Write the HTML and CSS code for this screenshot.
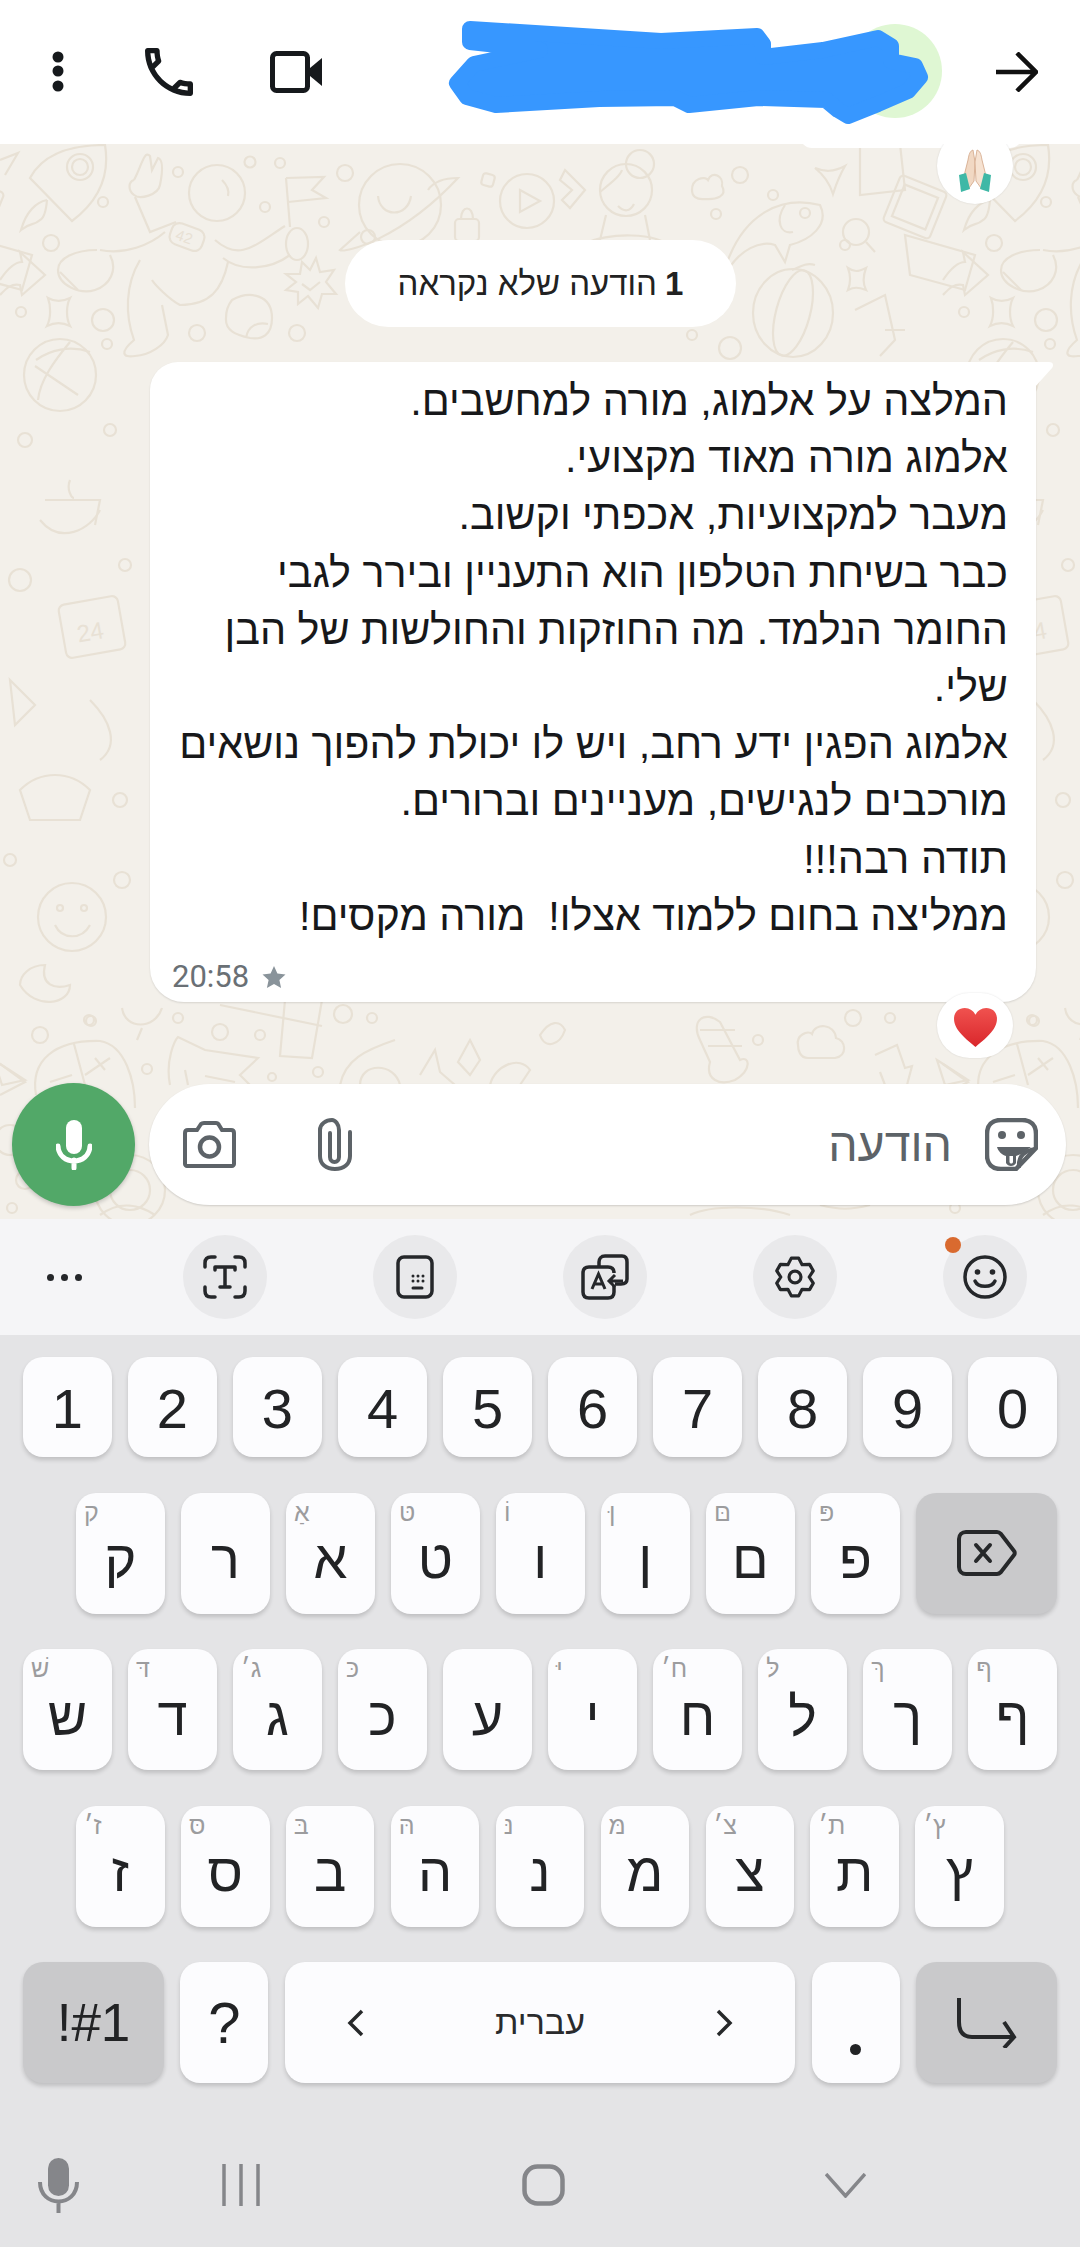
FILE: index.html
```html
<!DOCTYPE html>
<html lang="he">

<head>
    <meta charset="UTF-8">
    <meta name="viewport" content="width=device-width, initial-scale=1.0">
    <title>Chat</title>
    <link rel="stylesheet" href="styles.css">
</head>

<body>
    <!-- Top bar -->
    <header class="topbar">
        <svg class="ic-dots" viewBox="0 0 12 42"><circle cx="6" cy="6" r="5.5"/><circle cx="6" cy="20" r="5.5"/><circle cx="6" cy="35" r="5.5"/></svg>
        <svg class="ic-phone" viewBox="3 3 18 18"><path d="M6.54 5c.06.89.21 1.76.45 2.59l-1.2 1.2c-.41-1.2-.67-2.47-.76-3.79h1.51m9.86 12.02c.85.24 1.72.39 2.6.45v1.49c-1.32-.09-2.59-.35-3.8-.75l1.2-1.19M7.5 3H4c-.55 0-1 .45-1 1 0 9.39 7.61 17 17 17 .55 0 1-.45 1-1v-3.49c0-.55-.45-1-1-1-1.24 0-2.45-.2-3.57-.57-.1-.04-.21-.05-.31-.05-.26 0-.51.1-.71.29l-2.2 2.2c-2.83-1.45-5.15-3.76-6.59-6.59l2.2-2.2c.28-.28.36-.67.25-1.02C8.7 6.45 8.5 5.25 8.5 4c0-.55-.45-1-1-1z"/></svg>
        <svg class="ic-video" viewBox="0 0 52 42"><rect x="2.5" y="2.5" width="35" height="37" rx="4" fill="none" stroke="#16191c" stroke-width="5"/><path d="M40 17 L52 7 V35 L40 25 Z" fill="#16191c"/></svg>
        <svg class="ic-back" viewBox="0 0 42 40"><path d="M0 20 H39 M21 1 L40 20 L21 39" fill="none" stroke="#111" stroke-width="4.5"/></svg>
        <!-- blue scribble hides the name -->
        <svg class="scribble" viewBox="0 0 1080 144">
            <circle cx="895" cy="71" r="47" fill="#dff7d3"/>
            <path d="M470 29 L661 41 L757 36 L763 44 L763 57 L823 50 L878 38 L891 46 L891 61 L915 66 L920 77 L908 91 L878 104 L848 116 L838 110 L826 100 L758 98 L689 105 L675 98 L599 99 L496 105 L467 97 L457 83 L474 64 L540 50 L470 42 Z" fill="#3797ff" stroke="#3797ff" stroke-width="16" stroke-linejoin="round"/>
        </svg>
    </header>

    <!-- Conversation -->
    <main class="chat">
        <svg class="wallpaper" viewBox="0 144 1080 1075">
            <defs>
                <g id="tile">
                    <path d="M0 160 L18 153 L5 175"/>
                    <path d="M30 178 C45 150 80 145 105 145 C110 175 100 200 72 221 Z"/>
                    <circle cx="80" cy="167" r="13"/><circle cx="80" cy="167" r="8"/>
                    <path d="M47 200 C36 202 26 212 21 230 C30 222 34 226 40 220 C44 218 46 212 47 200"/>
                    <path d="M134 180 C142 165 144 150 150 156 L152 170 L158 158 C164 160 162 175 160 185 C158 195 140 200 134 195 C128 190 128 182 134 180"/>
                    <path d="M135 197 L150 232 L176 222"/>
                    <circle cx="217" cy="193" r="28"/><path d="M222 180 C228 186 229 192 228 196"/>
                    <path d="M165 232 C150 245 125 255 100 250"/>
                    <path d="M97 250 C75 250 58 258 58 270 C58 285 80 295 95 290 C110 285 118 270 110 255"/>
                    <path d="M60 272 L78 290"/>
                    <rect x="170" y="226" width="34" height="22" rx="8" transform="rotate(20 187 237)"/>
                    <text x="176" y="243" class="tag" transform="rotate(20 187 237)">42</text>
                    <path d="M215 240 C240 262 255 245 285 226"/>
                    <ellipse cx="297" cy="244" rx="11" ry="16"/>
                    <path d="M223 258 C240 272 270 270 290 255"/>
                    <path d="M228 262 C222 290 210 305 180 305 C170 300 155 285 152 280"/>
                    <path d="M140 260 C125 285 125 315 134 340 C120 352 122 358 135 356 C150 355 165 345 168 335 L162 305"/>
                    <path d="M286 178 L290 227 M286 178 L324 177 L312 190 L326 198 L288 202"/>
                    <circle cx="250" cy="162" r="5.5"/><circle cx="280" cy="163" r="5"/><circle cx="178" cy="172" r="5"/><circle cx="103" cy="202" r="5"/><circle cx="265" cy="207" r="5"/><circle cx="324" cy="222" r="5"/><circle cx="51" cy="243" r="8"/><circle cx="345" cy="173" r="8"/><circle cx="21" cy="312" r="5"/><circle cx="103" cy="320" r="11"/><circle cx="197" cy="333" r="8"/><circle cx="107" cy="344" r="5"/><circle cx="297" cy="333" r="8"/>
                    <path d="M0 280 C10 265 18 262 22 262 L20 252 L45 275 L22 295 L20 285 C10 283 5 290 0 295"/>
                    <path d="M48 298 C55 302 62 302 70 298 C66 306 66 318 70 326 C62 322 55 322 47 326 C51 318 51 306 48 298Z"/>
                    <path d="M302 262 L310 270 L316 258 L320 272 L334 270 L326 282 L336 294 L322 294 L318 308 L308 296 L298 304 L298 292 L286 290 L296 282 L286 274 L300 274 Z"/>
                    <path d="M302 284 L310 290 L320 282"/>
                    <path d="M232 300 C250 290 272 295 272 318 C272 335 262 340 250 338 C235 335 225 330 226 318 C226 310 228 305 232 300Z M246 338 C248 325 258 322 268 324"/>
                    <circle cx="60" cy="375" r="36"/><path d="M36 360 C50 350 70 345 90 352 M35 366 L78 395 M70 342 C55 360 40 380 38 400"/>
                    <circle cx="400" cy="205" r="41"/><path d="M378 196 C380 218 408 218 411 196"/>
                    <path d="M360 232 L340 250 C345 253 400 240 458 178 C440 178 432 184 428 190"/>
                    <circle cx="368" cy="237" r="7"/>
                    <rect x="455" y="219" width="24" height="22" rx="4"/><path d="M461 219 C461 205 473 205 473 219"/>
                    <rect x="482" y="174" width="12" height="12" rx="3" transform="rotate(15 488 180)"/>
                    <circle cx="527" cy="201" r="27"/><path d="M520 190 L540 201 L520 212 Z"/>
                    <path d="M565 170 L585 190 L570 208 L562 200 L572 190 L560 180 Z"/>
                    <circle cx="626" cy="190" r="26"/><circle cx="640" cy="164" r="14"/><path d="M600 192 C612 182 620 176 622 170 M606 215 L600 240 M645 215 L650 240 M585 244 C605 232 660 232 672 248"/>
                    <path d="M618 206 C624 212 630 212 634 204"/>
                    <path d="M692 190 C692 178 705 176 708 180 C712 170 724 176 722 186 C728 196 716 200 705 199 C696 200 692 196 692 190Z"/>
                    <path d="M815 168 C825 172 833 172 845 166 C838 178 836 185 833 194 C830 184 825 176 815 168Z"/>
                    <path d="M860 144 L860 195 L905 190 L900 144"/>
                    <rect x="890" y="182" width="50" height="50" rx="4" transform="rotate(22 915 207)"/>
                    <rect x="897" y="190" width="36" height="34" transform="rotate(22 915 207)"/>
                    <path d="M728 260 C745 215 780 195 820 205 C830 225 810 240 790 245 L785 262 L775 245 C760 240 740 250 728 270"/>
                    <path d="M785 205 C775 220 780 235 793 232"/>
                    <circle cx="856" cy="232" r="13"/><path d="M866 242 L875 252"/>
                    <path d="M905 235 L975 255 L965 290 L910 275 Z"/>
                    <ellipse cx="793" cy="313" rx="40" ry="44"/><ellipse cx="793" cy="313" rx="17" ry="44" transform="rotate(15 793 313)"/>
                    <path d="M792 270 C798 268 805 262 815 265"/>
                    <path d="M848 268 C854 272 858 272 866 268 C863 276 863 284 866 290 C858 287 854 287 848 290 C851 282 851 276 848 268Z"/>
                    <path d="M855 310 L885 295 L895 340 L880 356 M885 330 L905 330"/>
                    <circle cx="730" cy="348" r="11"/><circle cx="692" cy="335" r="5"/><circle cx="716" cy="214" r="5"/><circle cx="773" cy="195" r="5"/><circle cx="740" cy="175" r="8"/><circle cx="805" cy="213" r="5"/><circle cx="845" cy="245" r="5"/>
                    <path d="M40 520 C60 545 90 530 100 510 M45 500 L100 500 L95 525 M70 480 C66 490 72 498 74 498"/>
                    <circle cx="25" cy="440" r="7"/><circle cx="110" cy="430" r="6"/><circle cx="20" cy="580" r="11"/><circle cx="125" cy="565" r="6"/>
                    <rect x="62" y="600" width="60" height="54" rx="6" transform="rotate(-10 92 627)"/>
                    <text x="76" y="640" class="tag big" transform="rotate(-10 92 627)">24</text>
                    <path d="M10 680 L35 705 L15 725 Z"/><path d="M90 700 C110 720 120 745 100 760"/>
                    <path d="M20 790 C40 770 70 770 90 790 L80 820 L30 820 Z"/><circle cx="120" cy="800" r="7"/>
                    <circle cx="72" cy="917" r="34"/><circle cx="60" cy="908" r="3"/><circle cx="84" cy="908" r="3"/><path d="M55 925 C62 940 82 940 90 925"/>
                    <path d="M20 985 C35 1010 70 1005 70 985 C55 990 40 985 45 965 C30 965 20 975 20 985Z"/>
                    <circle cx="10" cy="860" r="6"/><circle cx="122" cy="880" r="8"/>
                    <path d="M122 1008 C125 1030 155 1030 162 1008 M142 1028 L137 1040"/>
                    <circle cx="89" cy="1020" r="5"/><circle cx="40" cy="1035" r="8"/><circle cx="178" cy="1018" r="5"/><circle cx="220" cy="1032" r="8"/><circle cx="260" cy="1035" r="5"/><circle cx="343" cy="1014" r="9"/><circle cx="372" cy="1018" r="5"/><circle cx="147" cy="1069" r="5"/><circle cx="318" cy="1072" r="5"/><circle cx="272" cy="1077" r="4"/>
                    <path d="M36 1095 C30 1060 55 1040 100 1041 C125 1045 135 1080 135 1108 M74 1044 L85 1085 M95 1058 L105 1070 M85 1075 L110 1058 M50 1082 L72 1075"/>
                    <path d="M0 1064 L25 1082 L0 1095"/>
                    <path d="M170 1085 C165 1060 175 1040 178 1037 L205 1050 L258 1058 L240 1075 L250 1085"/>
                    <path d="M185 1070 L188 1085 M205 1076 L235 1082"/>
                    <path d="M285 1000 L280 1056 L312 1058 L322 1000 M220 1005 L322 1026"/>
                    <path d="M340 1085 C345 1060 365 1050 395 1040 M360 1085 C360 1062 395 1062 400 1085"/>
                    <path d="M420 1075 L435 1050 L440 1072 L455 1085 M470 1040 L480 1060 L470 1075 L458 1062 Z"/>
                    <path d="M490 1085 C495 1065 520 1055 530 1070 L520 1085"/>
                    <path d="M540 1035 C550 1020 560 1020 565 1030 C560 1045 545 1050 540 1035Z"/>
                    <path d="M710 1062 L700 1040 C690 1020 705 1010 720 1022 L740 1060 C750 1055 752 1070 735 1080 C720 1086 705 1080 710 1062Z"/>
                    <path d="M700 1030 L735 1030 M708 1046 L742 1046"/>
                    <path d="M798 1045 C796 1035 808 1030 812 1034 C815 1022 835 1024 836 1038 C846 1040 848 1056 835 1058 L808 1058 C800 1058 798 1050 798 1045Z"/>
                    <circle cx="758" cy="1040" r="5"/><circle cx="853" cy="1018" r="8"/><circle cx="890" cy="1018" r="5"/><circle cx="1034" cy="1021" r="5"/>
                    <path d="M875 1055 L897 1045 L905 1068 L912 1066 L907 1085 M880 1072 L885 1085"/>
                    <path d="M937 1060 L968 1080 L945 1085 Z"/>
                    <circle cx="130" cy="1190" r="35"/><circle cx="130" cy="1190" r="20"/>
                    <path d="M18 1140 L45 1152 L35 1175 Z"/><circle cx="10" cy="1140" r="15"/><circle cx="12" cy="1208" r="5"/><circle cx="25" cy="1180" r="9"/>
                    <path d="M100 1215 C120 1200 140 1205 155 1215"/>
                    <path d="M690 1215 C710 1205 760 1205 790 1215 M820 1205 C840 1210 850 1210 870 1205"/>
                </g>
            </defs>
            <use href="#tile"/>
            <use href="#tile" x="943"/>
            <use href="#tile" x="-943"/>
        </svg>

        <div class="prev-bubble"></div>
        <div class="reaction reaction-top">
            <svg viewBox="0 0 36 44" class="emoji-pray">
                <path d="M16 2 C13 3 12 6 11 12 L7 28 L12 40 L17 33 L18 14 Z" fill="#f1d8c3" stroke="#d6ad90" stroke-width=".9"/>
                <path d="M20 2 C23 3 24 6 25 12 L29 28 L24 40 L19 33 L18 14 Z" fill="#f6e2d1" stroke="#d6ad90" stroke-width=".9"/>
                <path d="M2 27 L9 25 L13 41 L4 44 Z" fill="#3fb8a6"/>
                <path d="M34 27 L27 25 L23 41 L32 44 Z" fill="#3fb8a6"/>
            </svg>
        </div>

        <div class="unread" dir="rtl"><b>1</b> הודעה שלא נקראה</div>

        <div class="bubble">
            <div class="bubble-text" dir="rtl">המלצה על אלמוג, מורה למחשבים.<br>אלמוג מורה מאוד מקצועי.<br>מעבר למקצועיות, אכפתי וקשוב.<br>כבר בשיחת הטלפון הוא התעניין ובירר לגבי<br>החומר הנלמד. מה החוזקות והחולשות של הבן<br>שלי.<br>אלמוג הפגין ידע רחב, ויש לו יכולת להפוך נושאים<br>מורכבים לנגישים, מעניינים וברורים.<br>תודה רבה!!!<br>ממליצה בחום ללמוד אצלו!&nbsp; מורה מקסים!</div>
            <div class="bubble-meta">
                <span class="time">20:58</span>
                <svg class="star" viewBox="0 0 24 24"><path d="M12 1 L15.4 8.6 L23.5 9.5 L17.4 15 L19.1 23 L12 18.9 L4.9 23 L6.6 15 L.5 9.5 L8.6 8.6 Z"/></svg>
            </div>
            <svg class="bubble-tail" viewBox="0 0 20 26"><path d="M0 0 H15 C19 0 20 3 18 6 L0 26 Z" fill="#fff"/></svg>
            <div class="reaction reaction-heart">
                <svg viewBox="0 0 46 42" class="emoji-heart">
                    <defs><linearGradient id="heartFill" x1="0" y1="0" x2="0" y2="1"><stop offset="0" stop-color="#f0524f"/><stop offset="1" stop-color="#d9262b"/></linearGradient></defs>
                    <path d="M23 41 C14 33 1 24 1 12 C1 5 6 1 12 1 C17 1 21 4 23 8 C25 4 29 1 34 1 C40 1 45 5 45 12 C45 24 32 33 23 41 Z" fill="url(#heartFill)"/>
                </svg>
            </div>
        </div>

        <div class="composer">
            <div class="mic-btn">
                <svg viewBox="0 0 36 50" class="ic-mic"><rect x="10" y="0" width="16" height="34" rx="8" fill="#fff"/><path d="M2 26 C3 46 33 46 34 26 M18 40 V48" fill="none" stroke="#fff" stroke-width="5" stroke-linecap="round"/></svg>
            </div>
            <div class="input-bar">
                <svg class="ic-camera" viewBox="0 0 53 47"><path d="M2 12 C2 10 3 9 5 9 H14 L18 3 C19 2 20 2 21 2 H33 C34 2 35 2 36 4 L39 9 H48 C50 9 51 10 51 12 V43 C51 44 50 45 49 45 H4 C3 45 2 44 2 43 Z" fill="none" stroke="#5d6368" stroke-width="4"/><circle cx="26.500" cy="26" r="9.500" fill="none" stroke="#5d6368" stroke-width="4.500"/></svg>
                <svg class="ic-clip" viewBox="0 0 34 53"><path d="M22 15 V39 C22 42 20 44 17.500 44 C15 44 13 42 13 39 V12 C13 6 17 2 20 2 C26 2 32 6 32 12 V38 C32 46 26 51 17 51 C8 51 2 46 2 38 V14" transform="translate(34 0) scale(-1 1)" fill="none" stroke="#5d6368" stroke-width="4" stroke-linecap="round"/></svg>
                <span class="placeholder" dir="rtl">הודעה</span>
                <svg class="ic-sticker" viewBox="0 0 53 53"><path d="M16 2 H37 C46 2 51 7 51 16 V30 L31 51 H16 C7 51 2 46 2 37 V16 C2 7 7 2 16 2 Z" fill="none" stroke="#5d6368" stroke-width="4.500"/><circle cx="17" cy="17" r="4" fill="#5d6368"/><circle cx="36" cy="17" r="4" fill="#5d6368"/><path d="M34 50 C33 40 38 33 50 31" fill="none" stroke="#5d6368" stroke-width="4"/><path d="M12 29 H46 L36 36 L31 38 V45 C29 49 23 49 21 45 V38 C17 37 13 33 12 29 Z" fill="#5d6368"/><path d="M24.500 38 V44 C25 46 27.500 46 28 44 V38 Z" fill="#fff"/></svg>
            </div>
        </div>
    </main>

    <!-- Keyboard toolbar -->
    <section class="toolbar">
        <svg class="ic-more" viewBox="0 0 37 9"><circle cx="4.500" cy="4.500" r="3.500"/><circle cx="18.500" cy="4.500" r="3.500"/><circle cx="32.500" cy="4.500" r="3.500"/></svg>
        <div class="tool">
            <svg viewBox="0 0 44 44"><path d="M2 12 V8 C2 4 4 2 8 2 H12 M32 2 H36 C40 2 42 4 42 8 V12 M2 32 V36 C2 40 4 42 8 42 H12 M32 42 H36 C40 42 42 40 42 36 V32 M12 12 H32 M12 12 V15 M32 12 V15 M22 12 V32 M17 32 H27" fill="none" stroke="#25272a" stroke-width="3.500" stroke-linecap="round"/></svg>
        </div>
        <div class="tool">
            <svg viewBox="0 0 44 44"><rect x="5" y="2" width="34" height="40" rx="6" fill="none" stroke="#25272a" stroke-width="3.500"/><g fill="#25272a"><circle cx="20" cy="21" r="1.500"/><circle cx="25" cy="21" r="1.500"/><circle cx="30" cy="21" r="1.500"/><circle cx="20" cy="26" r="1.500"/><circle cx="25" cy="26" r="1.500"/><circle cx="30" cy="26" r="1.500"/></g><path d="M20 33 H29" stroke="#25272a" stroke-width="3" stroke-linecap="round"/></svg>
        </div>
        <div class="tool">
            <svg class="ic-translate" viewBox="0 0 48 46"><path d="M18 12 V8 C18 5 20 2 24 2 H41 C44 2 46 4 46 8 V25 C46 28 44 30 40 30 H34" fill="none" stroke="#25272a" stroke-width="3.500"/><path d="M33 32 V38 C33 42 31 44 27 44 H8 C4 44 2 42 2 38 V19 C2 15 4 13 8 13 H27 C31 13 33 15 33 19" fill="none" stroke="#25272a" stroke-width="3.500"/><path d="M11 35 L17.500 20 L24 35 M13 30 H22 M42 27 H29 M34 21 L28 27 L34 33" fill="none" stroke="#25272a" stroke-width="3"/></svg>
        </div>
        <div class="tool">
            <svg viewBox="0 0 48 48"><path d="M20 3.400 H28 L31.750 10.600 L39.900 10.200 L43.900 17.200 L39.500 24 L43.900 30.800 L39.900 37.800 L31.750 37.400 L28 44.600 H20 L16.250 37.400 L8.100 37.800 L4.100 30.800 L8.500 24 L4.100 17.200 L8.100 10.200 L16.250 10.600 Z" fill="none" stroke="#25272a" stroke-width="3.500" stroke-linejoin="round"/><circle cx="24" cy="24" r="6.500" fill="none" stroke="#25272a" stroke-width="3.500"/></svg>
        </div>
        <div class="tool tool-last">
            <span class="notify"></span>
            <svg viewBox="0 0 44 44"><circle cx="22" cy="22" r="20" fill="none" stroke="#25272a" stroke-width="3.500"/><circle cx="14.500" cy="17" r="2.800" fill="#25272a"/><circle cx="29.500" cy="17" r="2.800" fill="#25272a"/><path d="M12 26 C15 33 29 33 32 26" fill="none" stroke="#25272a" stroke-width="3.500" stroke-linecap="round"/></svg>
        </div>
    </section>

    <!-- Keyboard -->
    <section class="keyboard">
        <div class="row row-num">
            <div class="key num">1</div><div class="key num">2</div><div class="key num">3</div><div class="key num">4</div><div class="key num">5</div><div class="key num">6</div><div class="key num">7</div><div class="key num">8</div><div class="key num">9</div><div class="key num">0</div>
        </div>
        <div class="row row-inset-left">
            <div class="key"><i>ק</i>ק</div><div class="key">ר</div><div class="key"><i>אַ</i>א</div><div class="key"><i>טּ</i>ט</div><div class="key"><i>וֹ</i>ו</div><div class="key"><i>ןּ</i>ן</div><div class="key"><i>םּ</i>ם</div><div class="key"><i>פּ</i>פ</div>
            <div class="key mod wide">
                <svg class="ic-backspace" viewBox="0 0 60 46"><path d="M9 2 H40 C42 2 43 3 44 4 L57 21 C58 22 58 24 57 25 L44 42 C43 43 42 44 40 44 H9 C5 44 2 41 2 37 V9 C2 5 5 2 9 2 Z" fill="none" stroke="#26282a" stroke-width="4"/><path d="M19 15 L33 31 M33 15 L19 31" stroke="#26282a" stroke-width="4" stroke-linecap="round"/></svg>
            </div>
        </div>
        <div class="row">
            <div class="key"><i>שׁ</i>ש</div><div class="key"><i>דּ</i>ד</div><div class="key"><i>ג׳</i>ג</div><div class="key"><i>כּ</i>כ</div><div class="key">ע</div><div class="key"><i>יּ</i>י</div><div class="key"><i>ח׳</i>ח</div><div class="key"><i>לּ</i>ל</div><div class="key"><i>ךּ</i>ך</div><div class="key"><i>ףּ</i>ף</div>
        </div>
        <div class="row row-inset">
            <div class="key"><i>ז׳</i>ז</div><div class="key"><i>סּ</i>ס</div><div class="key"><i>בּ</i>ב</div><div class="key"><i>הּ</i>ה</div><div class="key"><i>נּ</i>נ</div><div class="key"><i>מּ</i>מ</div><div class="key"><i>צ׳</i>צ</div><div class="key"><i>ת׳</i>ת</div><div class="key"><i>ץ׳</i>ץ</div>
        </div>
        <div class="row">
            <div class="key mod wide sym">!#1</div>
            <div class="key punct">?</div>
            <div class="key space">
                <svg class="chev" viewBox="0 0 18 28"><path d="M15 2 L3 14 L15 26" fill="none" stroke="#26282a" stroke-width="3.500"/></svg>
                <span class="lang" dir="rtl">עברית</span>
                <svg class="chev" viewBox="0 0 18 28"><path d="M3 2 L15 14 L3 26" fill="none" stroke="#26282a" stroke-width="3.500"/></svg>
            </div>
            <div class="key punct dot"><span></span></div>
            <div class="key mod wide">
                <svg class="ic-enter" viewBox="0 0 60 50"><path d="M2 0 V24 C2 34 6 39 15 39 H56 M47 24 L57 39 L47 50" fill="none" stroke="#26282a" stroke-width="4"/></svg>
            </div>
        </div>

        <nav class="navbar">
            <svg class="nav-mic" viewBox="0 0 41 55"><rect x="10" y="0" width="21" height="38" rx="10.500" fill="#85868a"/><path d="M2 24 C2 50 39 50 39 24 M20.500 43 V55" fill="none" stroke="#85868a" stroke-width="4"/></svg>
            <svg class="nav-recents" viewBox="0 0 38 42"><path d="M2 0 V42 M19 0 V42 M36 0 V42" stroke="#85868a" stroke-width="3.500"/></svg>
            <svg class="nav-home" viewBox="0 0 43 42"><rect x="2.500" y="2.500" width="38" height="37" rx="13" fill="none" stroke="#85868a" stroke-width="4.500"/></svg>
            <svg class="nav-hide" viewBox="0 0 41 25"><path d="M1 1 L20.500 23 L40 1" fill="none" stroke="#85868a" stroke-width="3.500"/></svg>
        </nav>
    </section>
</body>

</html>
```

FILE: styles.css
```css
* {
    box-sizing: border-box;
}

html,
body {
    margin: 0;
    padding: 0;
}

body {
    width: 1080px;
    height: 2247px;
    overflow: hidden;
    background-color: #e4e4e6;
    font-family: "Liberation Sans", "Noto Sans", sans-serif;
    color: #1b1c1e;
    display: flex;
    flex-direction: column;
}

/* Top bar */
.topbar {
    position: relative;
    height: 144px;
    background-color: #fff;
    display: flex;
    align-items: center;
    padding-left: 52px;
    flex: none;
}

.ic-dots {
    width: 12px;
    height: 42px;
    fill: #16191c;
}

.ic-phone {
    width: 48px;
    height: 48px;
    margin-left: 81px;
    fill: #16191c;
}

.ic-video {
    width: 52px;
    height: 42px;
    margin-left: 77px;
}

.ic-back {
    width: 42px;
    height: 40px;
    margin-left: 674px;
}

.scribble {
    position: absolute;
    left: 0;
    top: 0;
    width: 1080px;
    height: 144px;
}

/* Conversation */
.chat {
    position: relative;
    height: 1075px;
    flex: none;
    background-color: #f3f0ea;
    display: flex;
    flex-direction: column;
    overflow: hidden;
}

.wallpaper {
    position: absolute;
    left: 0;
    top: 0;
    width: 1080px;
    height: 1075px;
    fill: none;
    stroke: #e8e1d5;
    stroke-width: 2.2;
}

.tag {
    font-family: "Liberation Sans", sans-serif;
    font-size: 15px;
    fill: #e8e1d5;
    stroke: none;
}

.tag.big {
    font-size: 24px;
}

.prev-bubble {
    position: absolute;
    left: 800px;
    top: -10px;
    width: 222px;
    height: 14px;
    background-color: #fff;
    border-radius: 0 0 12px 12px;
}

.reaction {
    position: absolute;
    width: 76px;
    height: 76px;
    border-radius: 38px;
    background-color: #fff;
    box-shadow: 0 0 2px rgba(0, 0, 0, 0.12);
    display: flex;
    align-items: center;
    justify-content: center;
}

.reaction-top {
    left: 937px;
    top: -16px;
}

.emoji-pray {
    width: 36px;
    height: 44px;
    margin-top: 8px;
}

.reaction-heart {
    left: 787px;
    top: 631px;
    height: 65px;
}

.emoji-heart {
    width: 45px;
    height: 41px;
    margin-top: 4px;
}

.unread {
    position: relative;
    align-self: flex-start;
    margin: 96px 0 0 345px;
    width: 391px;
    height: 87px;
    border-radius: 44px;
    background-color: #fff;
    display: flex;
    align-items: center;
    justify-content: center;
    font-size: 33px;
    color: #222;
}

.unread b {
    margin-left: 8px;
}

.bubble {
    position: relative;
    margin: 35px 0 0 150px;
    width: 886px;
    height: 640px;
    background-color: #fff;
    border-radius: 28px 0 34px 34px;
    box-shadow: 0 1px 2px rgba(0, 0, 0, 0.12);
    padding: 11px 28px 0 22px;
    display: flex;
    flex-direction: column;
}

.bubble-text {
    font-size: 41.300px;
    line-height: 57.200px;
    color: #17181a;
    white-space: nowrap;
}

.bubble-meta {
    margin-top: 13px;
    display: flex;
    align-items: center;
    gap: 13px;
}

.time {
    font-family: Roboto, sans-serif;
    font-size: 31px;
    color: #6a7075;
}

.star {
    width: 24px;
    height: 24px;
    fill: #89939a;
}

.bubble-tail {
    position: absolute;
    right: -18px;
    top: 0;
    width: 20px;
    height: 26px;
}

/* Composer */
.composer {
    position: relative;
    margin-top: auto;
    padding: 0 14px 13px 12px;
    display: flex;
    align-items: center;
    gap: 14px;
}

.mic-btn {
    width: 123px;
    height: 123px;
    flex: none;
    border-radius: 50%;
    background-color: #52a868;
    box-shadow: 0 2px 4px rgba(0, 0, 0, 0.2);
    display: flex;
    align-items: center;
    justify-content: center;
}

.ic-mic {
    width: 36px;
    height: 50px;
}

.input-bar {
    flex: 1;
    height: 121px;
    border-radius: 61px;
    background-color: #fff;
    box-shadow: 0 1px 2px rgba(0, 0, 0, 0.15);
    display: flex;
    align-items: center;
    padding: 0 28px 0 34px;
}

.ic-camera {
    width: 53px;
    height: 47px;
}

.ic-clip {
    width: 34px;
    height: 53px;
    margin-left: 82px;
}

.placeholder {
    margin-left: auto;
    font-size: 46.500px;
    color: #5d6368;
}

.ic-sticker {
    width: 53px;
    height: 53px;
    margin-left: 33px;
}

/* Keyboard toolbar */
.toolbar {
    height: 116px;
    flex: none;
    background-color: #f5f5f7;
    display: flex;
    align-items: center;
    padding-left: 46px;
}

.ic-more {
    width: 37px;
    height: 9px;
    fill: #25272a;
    margin-right: 100px;
}

.tool {
    position: relative;
    width: 84px;
    height: 84px;
    border-radius: 50%;
    background-color: #e9e9eb;
    display: flex;
    align-items: center;
    justify-content: center;
    margin-right: 106px;
}

.tool svg {
    width: 44px;
    height: 44px;
}

.tool .ic-translate {
    width: 48px;
    height: 46px;
}

.tool-last {
    margin-right: 0;
}

.notify {
    position: absolute;
    left: 2px;
    top: 2px;
    width: 16px;
    height: 16px;
    border-radius: 50%;
    background-color: #d96a2f;
}

/* Keyboard */
.keyboard {
    flex: 1;
    background-color: #e4e4e6;
    padding: 22px 23px 0;
    display: flex;
    flex-direction: column;
    gap: 35.500px;
}

.row {
    display: flex;
    gap: 16.300px;
    height: 121px;
    flex: none;
}

.row-num {
    height: 100px;
}

.row-inset-left {
    margin-left: 53px;
}

.row-inset {
    margin: 0 53px;
}

.key {
    position: relative;
    flex: 1 1 0;
    min-width: 0;
    background-color: #fcfcfe;
    border-radius: 20px;
    box-shadow: 0 3px 4px rgba(0, 0, 0, 0.16);
    display: flex;
    align-items: center;
    justify-content: center;
    font-size: 54px;
    color: #222325;
    padding-top: 12px;
}

.key i {
    position: absolute;
    left: 8px;
    top: 5px;
    font-style: normal;
    font-size: 25px;
    color: #9c9c9e;
}

.key.num {
    font-size: 56px;
    padding-top: 2px;
}

.key.mod {
    background-color: #c9c9cb;
    padding-top: 0;
}

.key.wide {
    flex: 0 0 141px;
}

.key.sym {
    font-size: 53px;
}

.key.punct {
    flex: 0 0 88px;
    padding-top: 0;
    font-size: 58px;
}

.key.space {
    flex: 1 1 0;
    padding: 0 62px;
    justify-content: space-between;
}

.chev {
    width: 18px;
    height: 28px;
}

.lang {
    font-size: 34px;
    color: #2a2b2d;
}

.dot {
    align-items: flex-end;
}

.dot span {
    width: 11px;
    height: 11px;
    border-radius: 50%;
    background-color: #222325;
    margin-bottom: 28px;
}

.ic-backspace {
    width: 60px;
    height: 46px;
}

.ic-enter {
    width: 60px;
    height: 50px;
}

/* Nav bar */
.navbar {
    margin: 39px 0 0 15px;
    display: flex;
    align-items: center;
}

.nav-mic {
    width: 41px;
    height: 55px;
}

.nav-recents {
    width: 38px;
    height: 42px;
    margin-left: 143px;
}

.nav-home {
    width: 43px;
    height: 42px;
    margin-left: 262px;
}

.nav-hide {
    width: 41px;
    height: 25px;
    margin-left: 260px;
}
```
